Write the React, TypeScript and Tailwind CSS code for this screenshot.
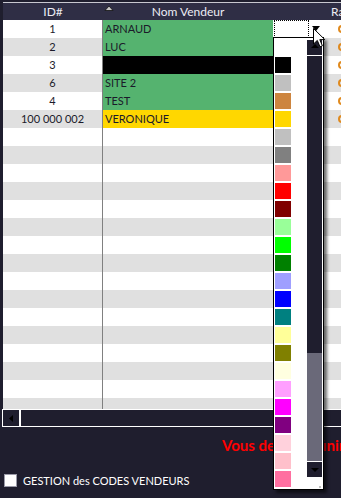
import React from "react";

const rows = [
  { id: "1", name: "ARNAUD", cell: "bg-[#55b36f]" },
  { id: "2", name: "LUC", cell: "bg-[#55b36f]" },
  { id: "3", name: "", cell: "bg-black" },
  { id: "6", name: "SITE 2", cell: "bg-[#55b36f]" },
  { id: "4", name: "TEST", cell: "bg-[#55b36f]" },
  { id: "100 000 002", name: "VERONIQUE", cell: "bg-[#ffd700]" },
];

const swatches = [
  "bg-white",
  "bg-black",
  "bg-[#c0c0c0]",
  "bg-[#cd853f]",
  "bg-[#ffd700]",
  "bg-[#c0c0c0]",
  "bg-[#808080]",
  "bg-[#ff9999]",
  "bg-[#ff0000]",
  "bg-[#800000]",
  "bg-[#99ff99]",
  "bg-[#00ff00]",
  "bg-[#008000]",
  "bg-[#9f9fff]",
  "bg-[#0000ff]",
  "bg-[#008080]",
  "bg-[#ffff99]",
  "bg-[#808000]",
  "bg-[#ffffe0]",
  "bg-[#ff9fff]",
  "bg-[#ff00ff]",
  "bg-[#800080]",
  "bg-[#ffd1dc]",
  "bg-[#ffc0cb]",
  "bg-[#ff6fa0]",
];

function Row({ index }: { index: number }) {
  const r = rows[index];
  const stripe = index % 2 === 0 ? "bg-white" : "bg-[#e0e0e0]";
  return (
    <div className={`flex h-[18px] ${stripe} text-[11px] leading-[18px] text-[#1b1a2a]`}>
      <div className="w-[100px] shrink-0 border-r border-[#808080] text-center">{r?.id}</div>
      <div className={`w-[170px] shrink-0 pl-[2px] ${r ? r.cell : ""}`}>{r?.name}</div>
      <div className="w-[51px] shrink-0" />
      <div className="flex flex-1 items-center pl-[14px]">
        {r && <div className="h-[8px] w-[8px] rounded-full border-2 border-[#e08a1e]" />}
      </div>
    </div>
  );
}

function ColorDropdown() {
  return (
    <>
      <div className="absolute left-[274px] top-[20px] h-[18px] w-[35px] border border-dotted border-black bg-white" />
      <div className="absolute left-[309px] top-[20px] flex h-[17px] w-[14px] items-center justify-center bg-white">
        <svg width="8" height="5" viewBox="0 0 8 5">
          <path d="M0 0H8L4 5Z" fill="#000" />
        </svg>
      </div>
      <div className="absolute left-[273px] top-[37px] flex h-[453px] w-[51px] border border-black bg-white shadow-[3px_3px_3px_rgba(0,0,0,0.55)]">
        <div className="flex w-[33px] flex-col gap-[2px] pl-[1px] pt-[1px]">
          {swatches.map((c, i) => (
            <div key={i} className={`h-[16px] w-[16px] shrink-0 ${c}`} />
          ))}
        </div>
        <div className="flex w-[15px] flex-col pt-[2px]">
          <div className="flex h-[15px] items-start justify-center bg-[#1f1e2e] pt-[4px]">
            <svg width="8" height="4" viewBox="0 0 8 4">
              <path d="M0 4H8L4 0Z" fill="#000" />
            </svg>
          </div>
          <div className="mt-[1px] flex h-[405px] flex-col justify-end bg-[#1f1e2e]">
            <div className="h-[108px] bg-[#6a6979]" />
          </div>
          <div className="mt-[1px] flex h-[15px] items-center justify-center bg-[#1f1e2e]">
            <svg width="8" height="4" viewBox="0 0 8 4">
              <path d="M0 0H8L4 4Z" fill="#000" />
            </svg>
          </div>
          <div className="flex flex-1 items-end justify-end pb-[1px] pr-[1px]">
            <div className="h-[2px] w-[2px] bg-[#c0c0c0]" />
          </div>
        </div>
      </div>
      <svg className="absolute left-[313px] top-[28px]" width="13" height="20" viewBox="0 0 13 20">
        <path d="M0.5 0.5V16L4.3 12.4L7 18.8L9.4 17.8L6.8 11.6H11.8Z" fill="#fff" stroke="#000" strokeWidth="1" />
      </svg>
    </>
  );
}

export default function App() {
  return (
    <div className="relative h-[498px] w-[341px] overflow-hidden bg-[#1f1e2e] font-['Lato',sans-serif]">
      <div className="ml-[3px] mt-[2px] w-[420px] border-t border-[#c8c8d0]">
        <div className="flex h-[17px] bg-[#2f2e45] text-[12px] leading-[17px] text-[#ececf4]">
          <div className="w-[100px] shrink-0 text-center">ID#</div>
          <div className="relative w-[170px] shrink-0 text-center">
            <svg className="absolute left-[1px] top-[2px]" width="10" height="6" viewBox="0 0 10 6">
              <path d="M1 5.5H9L5 1Z" fill="#c8c8c8" stroke="#111" strokeWidth="0.8" />
            </svg>
            Nom Vendeur
          </div>
          <div className="w-[51px] shrink-0" />
          <div className="pl-[7px]">Rang</div>
        </div>
        <div className="h-[389px] overflow-hidden">
          {Array.from({ length: 22 }).map((_, i) => (
            <Row key={i} index={i} />
          ))}
        </div>
        <div className="-ml-[1px] flex h-[18px] border border-white bg-[#1f1e2e]">
          <div className="flex w-[18px] items-center justify-center border-r-2 border-white">
            <svg width="4" height="7" viewBox="0 0 4 7">
              <path d="M4 0V7L0 3.5Z" fill="#000" />
            </svg>
          </div>
        </div>
      </div>
      <p className="mt-[9px] pl-[222px] text-[15px] font-bold leading-[18px] whitespace-nowrap text-[#ff0000]">
        Vous devez définir
      </p>
      <label className="mt-[20px] flex items-center gap-[6px] pl-[4px]">
        <span className="h-[13px] w-[13px] border border-[#9a9aa8] bg-white" />
        <span className="text-[11px] leading-[13px] text-white">GESTION des CODES VENDEURS</span>
      </label>
      <ColorDropdown />
    </div>
  );
}
